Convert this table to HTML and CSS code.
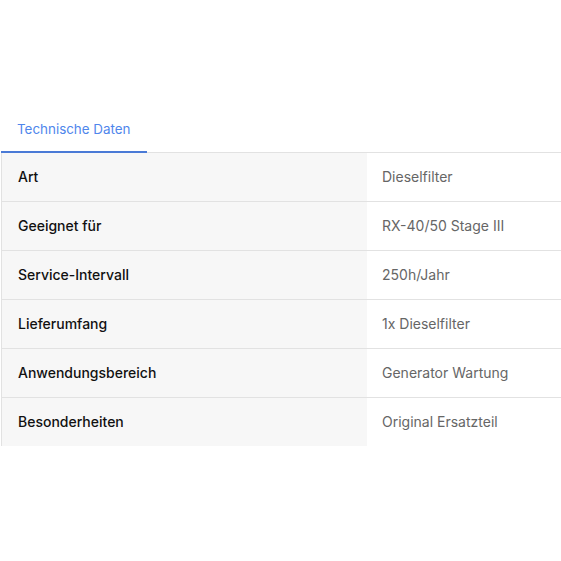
FILE: index.html
```html
<!DOCTYPE html>
<html lang="de">
<head>
<meta charset="utf-8">
<link rel="stylesheet" href="styles.css">
</head>
<body>
<div class="wrap">
  <div class="tabs">
    <div class="tab active">Technische Daten</div>
  </div>
  <table class="specs">
    <tr><th>Art</th><td>Dieselfilter</td></tr>
    <tr><th>Geeignet für</th><td>RX-40/50 Stage III</td></tr>
    <tr><th>Service-Intervall</th><td>250h/Jahr</td></tr>
    <tr><th>Lieferumfang</th><td>1x Dieselfilter</td></tr>
    <tr><th>Anwendungsbereich</th><td>Generator Wartung</td></tr>
    <tr><th>Besonderheiten</th><td>Original Ersatzteil</td></tr>
  </table>
</div>
</body>
</html>
```
FILE: styles.css
```css
html, body { margin: 0; padding: 0; background: #fff; }
body { font-family: Inter, "Noto Sans", sans-serif; }
.wrap { padding: 110px 0 0 1px; }
.tabs { display: flex; border-bottom: 1px solid #e2e2e2; }
.tab { font-size: 13.4px; color: #4f86ec; padding: 10px 16px 13px 16px; line-height: 18px; }
.tab.active { border-bottom: 2px solid #4a7ad6; margin-bottom: -1px; }
.specs { width: 100%; border-collapse: collapse; border-left: 1px solid #e2e2e2; }
.specs tr { border-bottom: 1px solid #e2e2e2; }
.specs tr:last-child { border-bottom: none; }
.specs th { text-align: left; font-weight: 500; font-size: 14px; color: #111; background: #f7f7f7; width: 349px; padding: 0 0 2px 16px; height: 46px; }
.specs td { font-size: 14px; color: #666; padding: 0 0 2px 15px; height: 46px; }
```
